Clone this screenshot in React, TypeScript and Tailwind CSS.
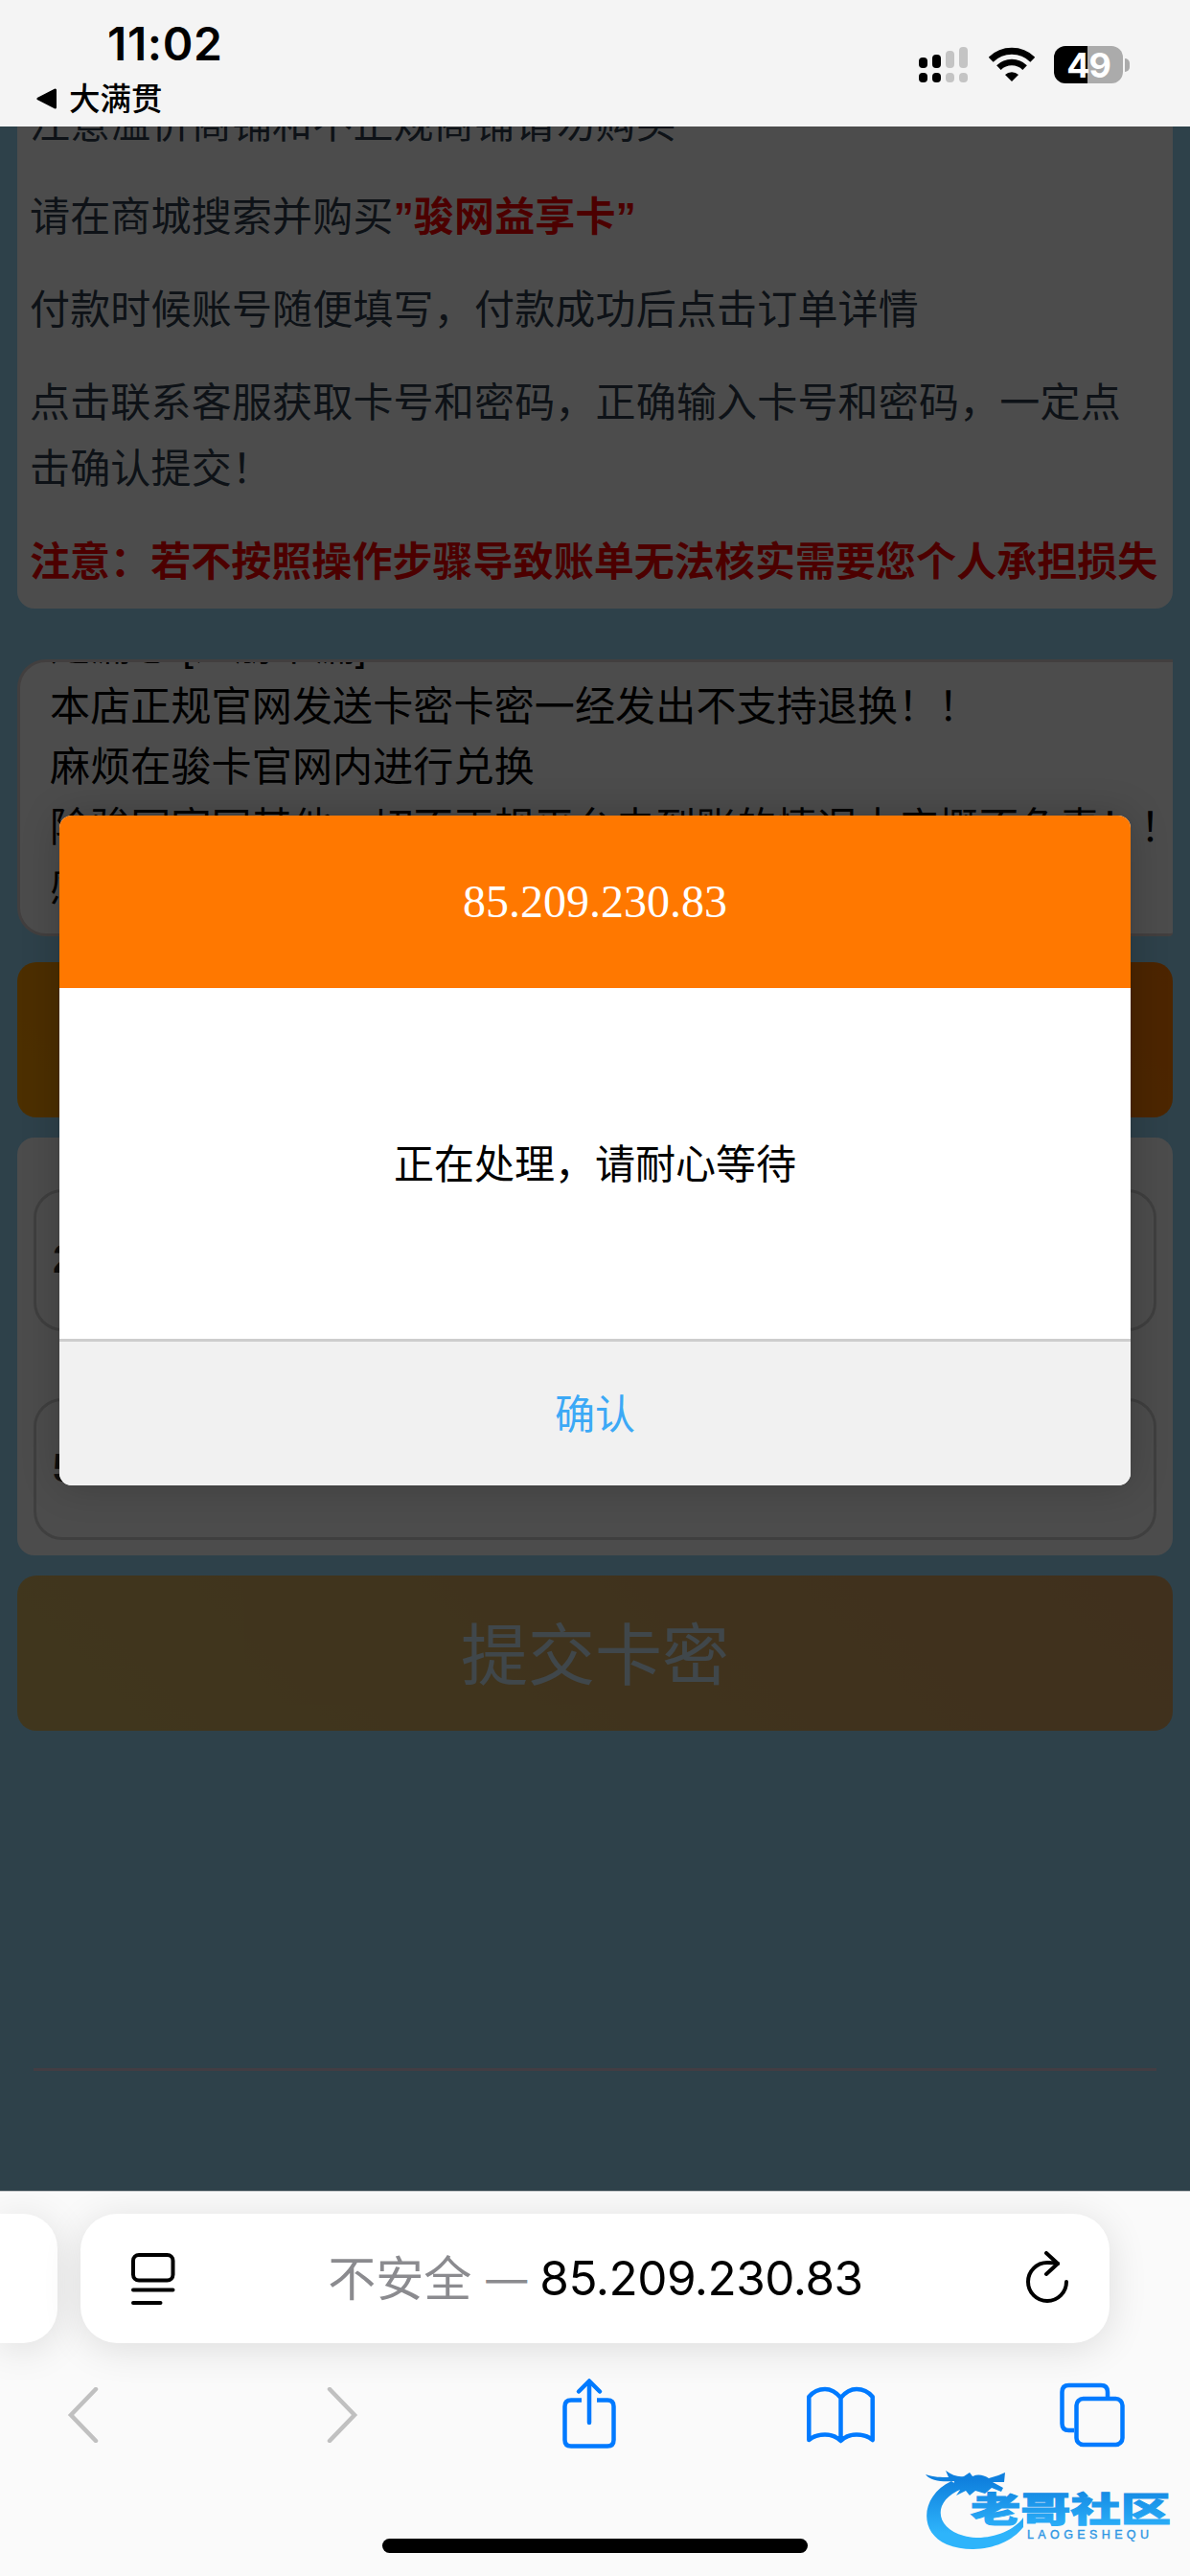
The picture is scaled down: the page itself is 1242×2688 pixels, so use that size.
const cjk = "font-['Liberation_Sans','Noto_Sans_CJK_SC',sans-serif]"

const StatusBar = () => {
    return (
        <header className="flex h-[132px] justify-between bg-[#f4f4f4] font-['Inter','Noto_Sans_CJK_SC',sans-serif] text-black">
            <div className="pl-[38px] pt-[18px]">
                <div className="pl-[74px] text-[48px] font-semibold leading-[56px] tracking-[0.6px]">11:02</div>
                <div className="mt-[8px] flex items-center">
                    <svg width="22" height="22" viewBox="0 0 22 22">
                        <path d="M2 11 L19.500 2 L19.500 20 Z" fill="black" stroke="black" strokeWidth="3" strokeLinejoin="round" />
                    </svg>
                    <span className="ml-[12px] mt-[2px] text-[32.500px] font-medium leading-[40px]">大满贯</span>
                </div>
            </div>

            <div className="flex items-start pr-[63px] pt-[48px]">
                <svg width="52" height="39" viewBox="0 0 52 39">
                    <rect x="0" y="12" width="9" height="11" rx="4" />
                    <rect x="14" y="9" width="9" height="14" rx="4" />
                    <rect x="28" y="5" width="9" height="18" rx="4" fill="#c4c4c4" />
                    <rect x="42" y="1" width="9" height="22" rx="4" fill="#c4c4c4" />
                    <rect x="0" y="28" width="9" height="10" rx="4" />
                    <rect x="14" y="28" width="9" height="10" rx="4" />
                    <rect x="28" y="28" width="9" height="10" rx="4" fill="#c4c4c4" />
                    <rect x="42" y="28" width="9" height="10" rx="4" fill="#c4c4c4" />
                </svg>
                <svg className="ml-[21px]" width="48" height="39" viewBox="0 0 48 39">
                    <path d="M2.200 14.200 A31 31 0 0 1 45.800 14.200" fill="none" stroke="black" strokeWidth="7" />
                    <path d="M10.400 22.600 A19.400 19.400 0 0 1 37.600 22.600" fill="none" stroke="black" strokeWidth="6.500" />
                    <path d="M24 37 L17 30 A10 10 0 0 1 31 30 Z" />
                </svg>
                <div className="ml-[20px] flex items-center">
                    <div className="flex h-[39px] w-[72px] items-center justify-center rounded-[12px] bg-[linear-gradient(90deg,#000_35px,#ababab_35px)] text-[36px] font-bold leading-none tracking-[-1px] text-white">
                        49
                    </div>
                    <div className="ml-[2px] h-[14px] w-[5px] rounded-r-full bg-[#ababab]"></div>
                </div>
            </div>
        </header>
    )
}

const Page = () => {
    return (
        <div className="flex h-full flex-col px-[18px]">
            {/* Steps */}
            <div className="-mt-[37px] flex flex-col gap-[28px] rounded-b-[18px] bg-white pb-[14px] pl-[13px] text-[42px] leading-[69px] tracking-[0.18px] text-[#303f4f]">
                <p>注意溢价商铺和不正规商铺请勿购买</p>
                <p>
                    请在商城搜索并购买<span className="font-bold text-[#ff0000]">”骏网益享卡”</span>
                </p>
                <p>付款时候账号随便填写，付款成功后点击订单详情</p>
                <p>
                    点击联系客服获取卡号和密码，正确输入卡号和密码，一定点
                    <br />
                    击确认提交！
                </p>
                <p className="whitespace-nowrap font-bold tracking-[0.05px] text-[#ff0000]">注意：若不按照操作步骤导致账单无法核实需要您个人承担损失</p>
            </div>

            {/* Notice */}
            <div className="mt-[53px] h-[289px] shrink-0 overflow-hidden rounded-br-[4px] rounded-l-[30px] border-y-[3px] border-l-[3px] border-[#dcd4d4] bg-white pl-[31px] text-[42px] leading-[63px] tracking-[0.15px] text-black">
                <div className="-mt-[48px] whitespace-nowrap">
                    <p>足漏心 [注册卡漏]</p>
                    <p>本店正规官网发送卡密卡密一经发出不支持退换！！</p>
                    <p>麻烦在骏卡官网内进行兑换</p>
                    <p>除骏网官网其他一切不正规平台未到账的情况本店概不负责！！</p>
                    <p>感谢</p>
                </div>
            </div>

            <div className="mt-[27px] h-[162px] shrink-0 rounded-[20px] bg-[linear-gradient(45deg,#ff9f00,#ff7b00)]"></div>

            {/* Card number and password */}
            <div className="mt-[21px] flex h-[436px] shrink-0 flex-col gap-[70px] rounded-[18px] bg-white px-[17px] pt-[54px] text-[42px] font-bold text-[#333]">
                <div className="flex h-[148px] items-center rounded-[30px] border-[3px] border-[#d3d3d3] px-[17px] pb-[3px]">2</div>
                <div className="flex h-[148px] items-center rounded-[30px] border-[3px] border-[#d3d3d3] px-[17px] pb-[3px]">5</div>
            </div>

            <button className="mt-[21px] h-[162px] shrink-0 rounded-[20px] bg-[linear-gradient(45deg,#ff9f00,#ff7b00)] pt-[8px] text-[70px] leading-none text-white opacity-60">
                提交卡密
            </button>

            <div className="mx-[17px] mt-[352px] h-[3px] shrink-0 bg-[#dccbe0]"></div>
        </div>
    )
}

const Dialog = () => {
    return (
        <div className="absolute inset-0 bg-black/70 px-[62px] pt-[719px]">
            <div className="overflow-hidden rounded-[13px] bg-white text-center text-[42px] text-black shadow-[0_0_40px_rgba(0,0,0,0.2)]">
                <div className="flex h-[180px] items-center justify-center bg-[#ff7800] font-['Liberation_Serif',serif] text-[48px] text-white">
                    85.209.230.83
                </div>
                <div className="flex h-[366px] items-center justify-center pt-[2px]">正在处理，请耐心等待</div>
                <div className="flex h-[153px] items-center justify-center border-t-[3px] border-[#cdcdcd] bg-[#f1f1f1] pt-[2px] text-[#3ca9f6]">
                    确认
                </div>
            </div>
        </div>
    )
}

const Watermark = () => {
    return (
        <svg width="264" height="92" viewBox="0 0 264 92">
            <defs>
                <linearGradient id="ink" x1="0" y1="0" x2="0" y2="92" gradientUnits="userSpaceOnUse">
                    <stop offset="0.150" stopColor="#0f80de" />
                    <stop offset="0.750" stopColor="#2eb4fb" />
                </linearGradient>
            </defs>
            {/* dragon body and head */}
            <path
                d="M27 15 C-5 30 -8 68 22 81 C50 92 86 84 102 63 L102 53 C90 70 60 78 40 72 C10 64 6 36 38 23 Z"
                fill="url(#ink)"
            />
            <path
                d="M0 8 C9 11 16 11 24 11 L21 4 C28 9 34 11 40 10 L46 6 L49 10 C55 7 61 9 66 12 L76 9 L83 6 L82 16 L70 16 L81 22 L79 26 L69 22 L62 28 L52 25 L46 30 L42 25 L32 30 L36 24 L28 23 L30 15 C18 16 5 15 0 8 Z"
                fill="url(#ink)"
            />
            <text x="47" y="58" textLength="209" lengthAdjust="spacingAndGlyphs" fontSize="36" fontWeight="900" fill="url(#ink)" stroke="url(#ink)" strokeWidth="1">
                老哥社区
            </text>
            <text x="106" y="74.500" textLength="127" lengthAdjust="spacing" fontSize="12.500" fill="#2f97e4" stroke="#2f97e4" strokeWidth="0.400">
                LAOGESHEQU
            </text>
        </svg>
    )
}

const BrowserBar = () => {
    return (
        <footer className="relative h-[402px] overflow-hidden border-t border-[#c4c6c8] bg-[#fafafa] font-['Inter','Noto_Sans_CJK_SC',sans-serif]">
            <div className="flex gap-[24px] pt-[23px]">
                <div className="h-[135px] w-[60px] rounded-r-[36px] bg-white shadow-[0_6px_40px_rgba(0,0,0,0.12)]"></div>
                <div className="flex h-[135px] w-[1074px] items-center justify-between rounded-[38px] bg-white pl-[53px] pr-[41px] shadow-[0_6px_40px_rgba(0,0,0,0.12)]">
                    <svg width="46" height="56" viewBox="0 0 46 56" fill="none" stroke="black" strokeWidth="4" strokeLinecap="round">
                        <rect x="2" y="3" width="41.500" height="26.500" rx="6" />
                        <path d="M2 39.500 H43.500 M2 53 H30.500" />
                    </svg>
                    <div className="flex items-center pr-[9px] pt-[1px] text-[50px] leading-none text-black">
                        <span className="text-[#8b8b8f]">不安全</span>
                        <span className="ml-[15px] text-[43px] text-[#8b8b8f]">—</span>
                        <span className="ml-[13px] text-[49.500px] tracking-[-0.5px]">85.209.230.83</span>
                    </div>
                    <svg width="48" height="58" viewBox="0 0 48 58" fill="none" stroke="black" strokeWidth="4" strokeLinecap="round" strokeLinejoin="round">
                        <path d="M44 32 A20 20 0 1 1 24 12 Q30 12 35 13" />
                        <path d="M23 2 L35 13 L23 24" />
                    </svg>
                </div>
            </div>

            <div className="mt-[35px] flex h-[80px] items-center pl-[70px] text-[#007aff]">
                <svg width="34" height="58" viewBox="0 0 34 58" fill="none" stroke="#c0c0c0" strokeWidth="4.500" strokeLinecap="round">
                    <path d="M30 2 L4 29 L30 56" />
                </svg>
                <svg className="ml-[236px]" width="34" height="58" viewBox="0 0 34 58" fill="none" stroke="#c0c0c0" strokeWidth="4.500" strokeLinecap="round">
                    <path d="M4 2 L30 29 L4 56" />
                </svg>
                <svg className="ml-[213px] -mt-[4px]" width="56" height="74" viewBox="0 0 56 74" fill="none" stroke="currentColor" strokeWidth="4.500" strokeLinecap="round" strokeLinejoin="round">
                    <path d="M20 23.500 H9 Q2.500 23.500 2.500 30 V65 Q2.500 71.500 9 71.500 H47 Q53.500 71.500 53.500 65 V30 Q53.500 23.500 47 23.500 H36" strokeLinecap="butt" />
                    <path d="M28 47 V4 M17 14.500 L28 3.500 L39 14.500" />
                </svg>
                <svg className="ml-[199px]" width="71" height="60" viewBox="0 0 71 60" fill="none" stroke="currentColor" strokeWidth="4.500" strokeLinejoin="round">
                    <path d="M35.500 12 Q28 3 19 3 Q9 3 2.300 11 V56 Q9 50.500 19 50.500 Q29 50.500 35.500 57 Q42 50.500 52 50.500 Q62 50.500 68.700 56 V11 Q62 3 52 3 Q43 3 35.500 12 Z V57" />
                </svg>
                <svg className="ml-[193px]" width="68" height="68" viewBox="0 0 68 68" fill="none" stroke="currentColor" strokeWidth="4.500">
                    <path d="M15 50 H9.500 Q2.500 50 2.500 43 V10 Q2.500 3 9.500 3 H43 Q50 3 50 10 V16" />
                    <rect x="17.500" y="17" width="48" height="48" rx="7" />
                </svg>
            </div>

            <div className="absolute bottom-[24px] left-[399px] h-[15px] w-[444px] rounded-full bg-black"></div>
            <div className="absolute bottom-[22px] left-[966px] font-['Liberation_Sans','Noto_Sans_CJK_SC',sans-serif]">
                <Watermark />
            </div>
        </footer>
    )
}

const App = () => {
    return (
        <div className="h-[2688px] w-[1242px] overflow-hidden">
            <StatusBar />
            <main className={"relative h-[2154px] overflow-hidden bg-[#9ad9f7] " + cjk}>
                <Page />
                <Dialog />
            </main>
            <BrowserBar />
        </div>
    )
}

export default App
